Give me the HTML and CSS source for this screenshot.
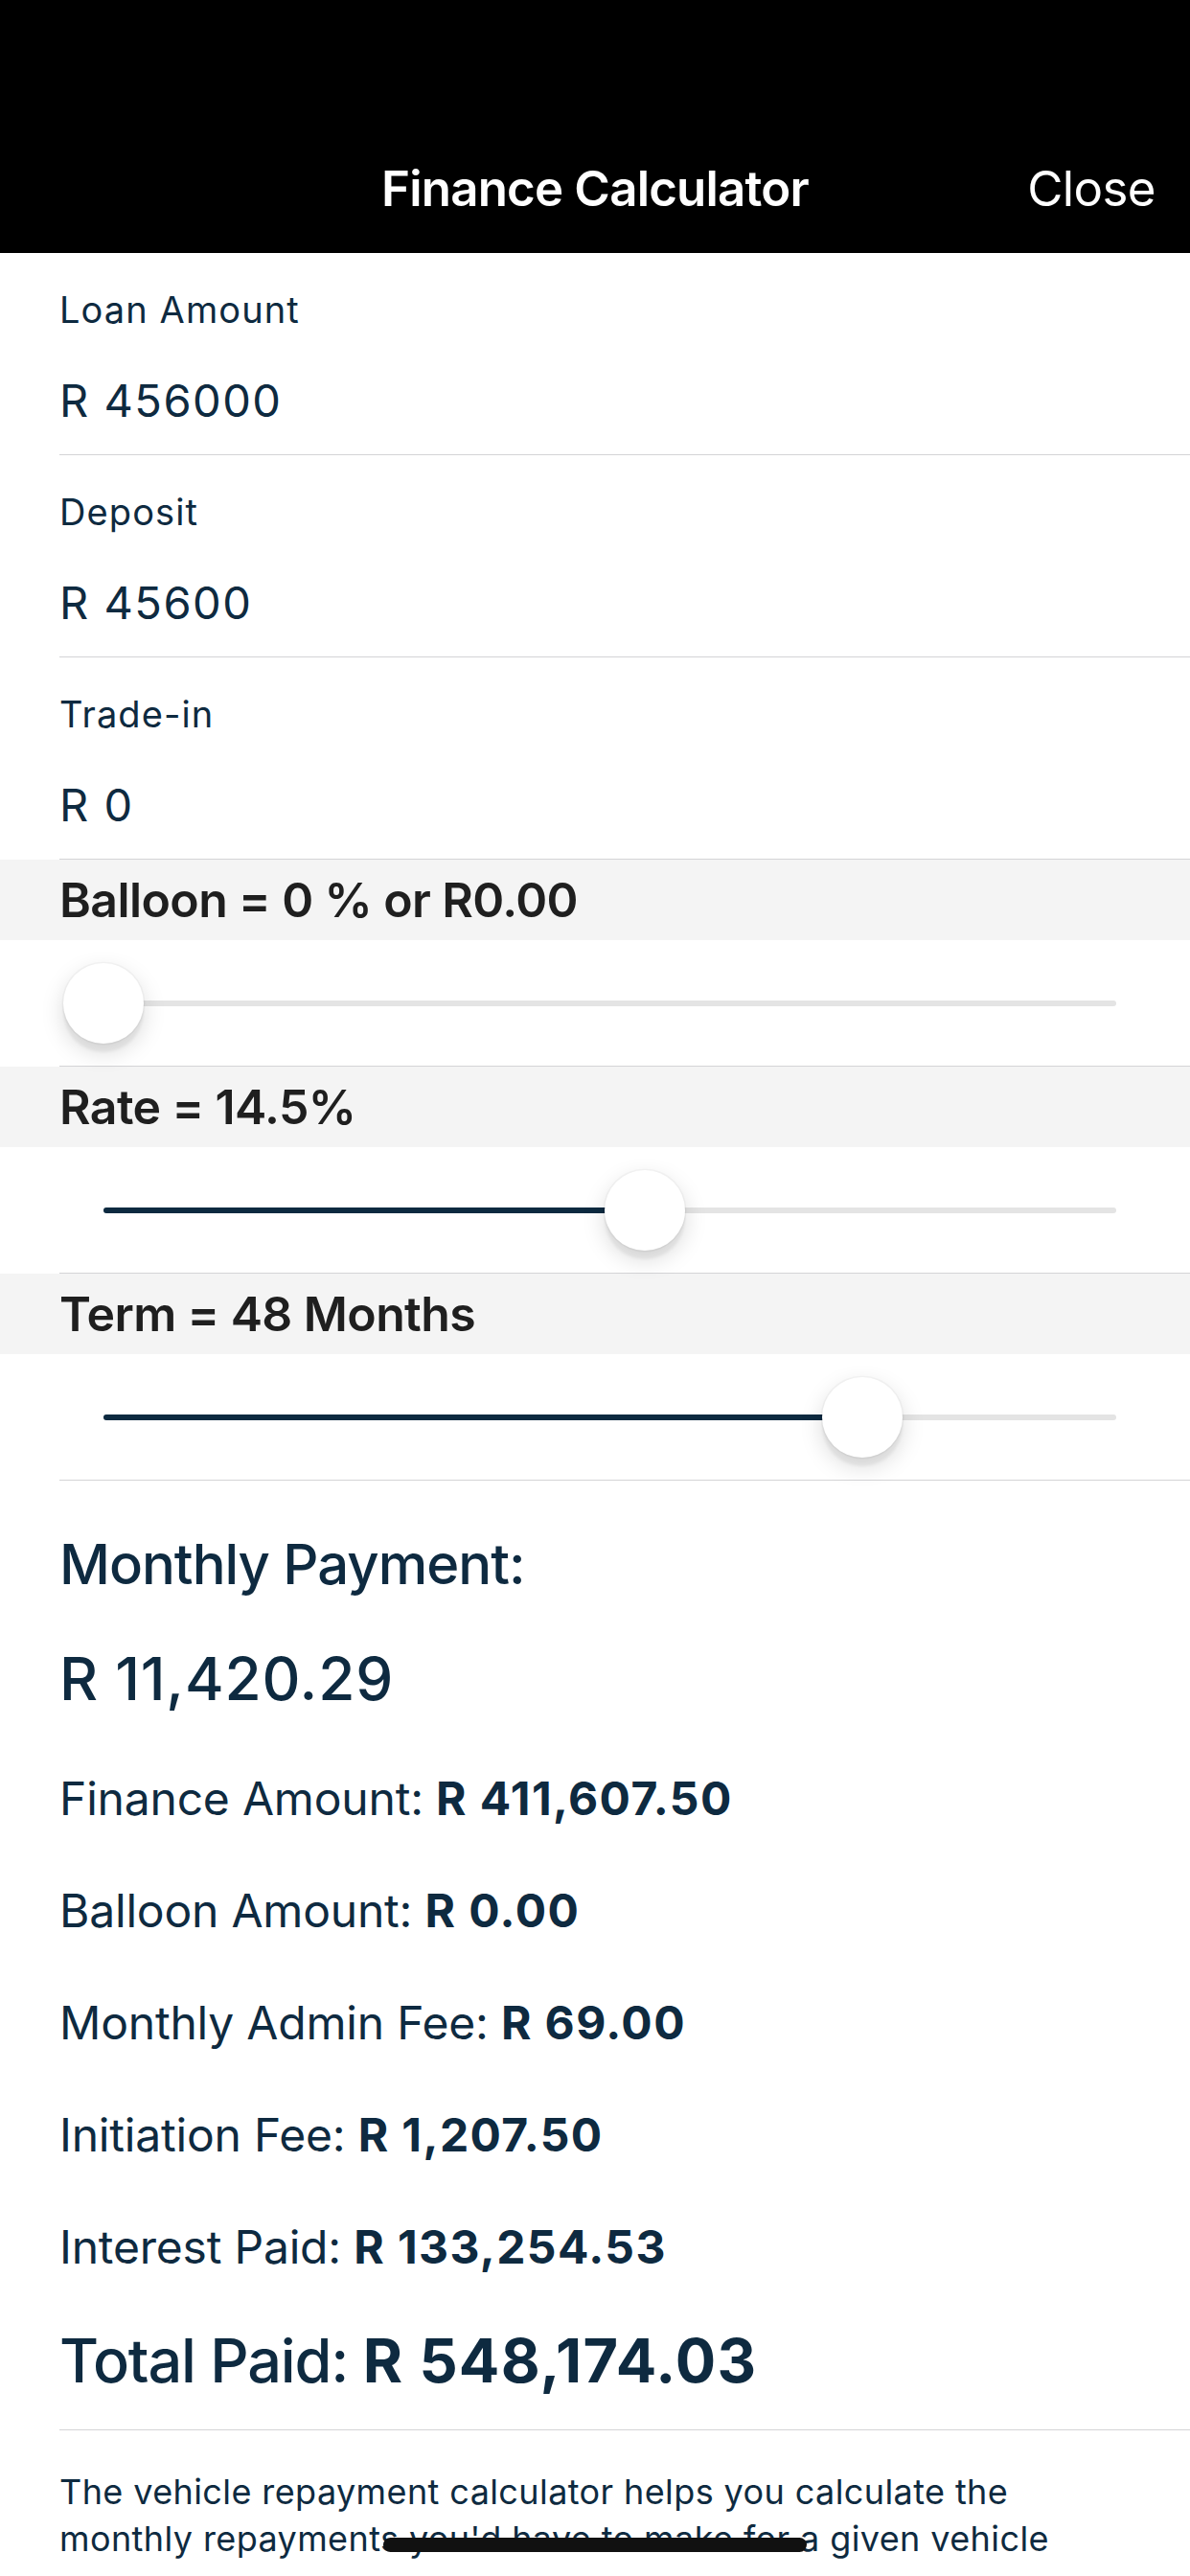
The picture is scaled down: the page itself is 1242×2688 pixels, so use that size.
FILE: index.html
```html
<!DOCTYPE html>
<html lang="en">
<head>
<meta charset="utf-8">
<title>Finance Calculator</title>
<link rel="stylesheet" href="styles.css">
</head>
<body>
<div class="screen">
  <header class="topbar">
    <div class="navbar">
      <span class="nav-spacer"></span>
      <h1 class="nav-title">Finance Calculator</h1>
      <span class="nav-close">Close</span>
    </div>
  </header>

  <section class="fields">
    <div class="field">
      <div class="field-label">Loan Amount</div>
      <div class="field-value">R 456000</div>
    </div>
    <div class="field">
      <div class="field-label">Deposit</div>
      <div class="field-value">R 45600</div>
    </div>
    <div class="field">
      <div class="field-label">Trade-in</div>
      <div class="field-value">R 0</div>
    </div>
  </section>

  <section class="sliders">
    <div class="slider-block">
      <div class="slider-head">Balloon = 0 % or R0.00</div>
      <div class="slider-area">
        <div class="track">
          <div class="track-fill" style="width:0%"></div>
          <div class="thumb" style="left:0%"></div>
        </div>
      </div>
    </div>
    <div class="slider-block">
      <div class="slider-head">Rate = 14.5%</div>
      <div class="slider-area">
        <div class="track">
          <div class="track-fill" style="width:53.5%"></div>
          <div class="thumb" style="left:53.5%"></div>
        </div>
      </div>
    </div>
    <div class="slider-block">
      <div class="slider-head">Term = 48 Months</div>
      <div class="slider-area">
        <div class="track">
          <div class="track-fill" style="width:74.9%"></div>
          <div class="thumb" style="left:74.9%"></div>
        </div>
      </div>
    </div>
  </section>

  <section class="results">
    <div class="res-title">Monthly Payment:</div>
    <div class="res-amount">R 11,420.29</div>
    <div class="res-list">
      <div class="res-row">Finance Amount: <b>R 411,607.50</b></div>
      <div class="res-row">Balloon Amount: <b>R 0.00</b></div>
      <div class="res-row">Monthly Admin Fee: <b>R 69.00</b></div>
      <div class="res-row">Initiation Fee: <b>R 1,207.50</b></div>
      <div class="res-row">Interest Paid: <b>R 133,254.53</b></div>
    </div>
    <div class="res-total">Total Paid: <b>R 548,174.03</b></div>
    <div class="res-rule"></div>
    <p class="res-note">The vehicle repayment calculator helps you calculate the monthly repayments you'd have to make for a given vehicle</p>
  </section>
</div>
<div class="home-indicator"></div>
</body>
</html>
```
FILE: styles.css
```css
* { box-sizing: border-box; }

html, body {
  margin: 0;
  padding: 0;
  background: #ffffff;
}

body {
  width: 1242px;
  height: 2688px;
  overflow: hidden;
  font-family: Inter, "Noto Sans", "Liberation Sans", sans-serif;
  color: #0e2a40;
}

.screen {
  width: 1242px;
}

/* Header */
.topbar {
  background: #000000;
  height: 264px;
  padding-top: 135px;
}

.navbar {
  display: grid;
  grid-template-columns: 1fr auto 1fr;
  align-items: center;
  height: 124px;
  line-height: 124px;
  color: #ffffff;
}

.nav-title {
  margin: 0;
  font-size: 51px;
  font-weight: 600;
  letter-spacing: -0.8px;
}

.nav-close {
  justify-self: end;
  padding-right: 36px;
  font-size: 51px;
  font-weight: 400;
  letter-spacing: -0.6px;
}

/* Input fields */
.fields {
  display: flex;
  flex-direction: column;
}

.field {
  margin-left: 62px;
  padding-top: 35px;
  padding-bottom: 26px;
  border-bottom: 1px solid #d4d4d6;
  display: flex;
  flex-direction: column;
  gap: 41px;
}

.field-label {
  font-size: 38px;
  line-height: 48px;
  font-weight: 400;
  letter-spacing: 1.1px;
}

.field-value {
  font-size: 47px;
  line-height: 60px;
  font-weight: 400;
  letter-spacing: 1.5px;
}

/* Sliders */
.slider-block {
  display: flex;
  flex-direction: column;
}

.slider-head {
  background: #f4f4f4;
  height: 84px;
  line-height: 84px;
  padding-left: 62px;
  font-size: 50px;
  font-weight: 600;
  color: #1f1f1f;
  letter-spacing: -0.6px;
}

.slider-area {
  height: 132px;
  margin-left: 62px;
  border-bottom: 1px solid #d4d4d6;
  display: flex;
  align-items: center;
  padding-left: 46px;
}

.track {
  position: relative;
  width: 1057px;
  height: 6px;
  border-radius: 3px;
  background: #e4e4e4;
}

.track-fill {
  height: 6px;
  border-radius: 3px;
  background: #0d2a40;
}

.thumb {
  position: absolute;
  top: 50%;
  width: 84px;
  height: 84px;
  border-radius: 50%;
  background: #ffffff;
  transform: translate(-50%, -50%);
  box-shadow: 0 9px 3px rgba(0, 0, 0, 0.05), 0 9px 24px rgba(0, 0, 0, 0.15), 0 0 0 1.5px rgba(0, 0, 0, 0.03);
}

/* Results */
.results {
  padding-left: 62px;
  padding-top: 52px;
}

.res-title {
  font-size: 58px;
  line-height: 70px;
  font-weight: 500;
  letter-spacing: -1px;
}

.res-amount {
  margin-top: 47px;
  font-size: 62px;
  line-height: 76px;
  font-weight: 500;
  letter-spacing: 0.8px;
}

.res-list {
  margin-top: 28px;
  display: flex;
  flex-direction: column;
}

.res-row {
  font-size: 48px;
  line-height: 117px;
  font-weight: 400;
  letter-spacing: -0.2px;
}

.res-row b {
  font-weight: 700;
  letter-spacing: 1.4px;
}

.res-total {
  margin-top: 20px;
  font-size: 63px;
  line-height: 80px;
  font-weight: 500;
  letter-spacing: -1.2px;
}

.res-total b {
  font-weight: 700;
  letter-spacing: 1.2px;
}

.res-rule {
  margin-top: 32px;
  height: 1px;
  background: #d4d4d6;
}

.res-note {
  margin: 40px 0 0 0;
  padding-right: 90px;
  font-size: 36px;
  line-height: 48.5px;
  font-weight: 400;
  letter-spacing: 0.4px;
}

/* iOS home indicator overlay */
.home-indicator {
  position: fixed;
  left: 400px;
  bottom: 25px;
  width: 442px;
  height: 15px;
  border-radius: 8px;
  background: #111111;
}
```
